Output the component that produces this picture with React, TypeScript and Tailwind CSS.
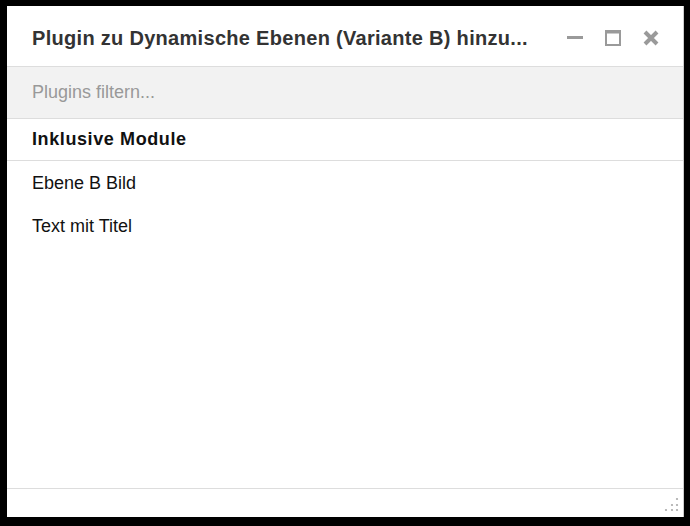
export default function App() {
  return (
    <div className="w-[690px] h-[526px] bg-black pl-[7px] pr-[6px] pt-[6px] pb-[9px] font-['Liberation_Sans',Arial,sans-serif]">
      <div className="h-full bg-white flex flex-col border-r border-[#ccc]">
        <div className="h-[61px] flex items-center justify-between pt-[3px] pl-[25px] pr-[24px] border-b border-[#ddd]">
          <h1 className="text-[20px] font-bold text-[#333] tracking-[0.3px]">
            Plugin zu Dynamische Ebenen (Variante B) hinzu...
          </h1>
          <div className="flex items-center gap-[22px] text-[#9a9a9a]">
            <svg width="16" height="16" viewBox="0 0 16 16">
              <rect x="0" y="6" width="16" height="3" fill="currentColor" />
            </svg>
            <svg width="16" height="16" viewBox="0 0 16 16">
              <rect x="1" y="1" width="14" height="14" fill="none" stroke="currentColor" strokeWidth="2" />
              <rect x="1" y="1" width="14" height="2.5" fill="currentColor" />
            </svg>
            <svg width="16" height="16" viewBox="0 0 16 16">
              <path d="M2 2 L14 14 M14 2 L2 14" stroke="currentColor" strokeWidth="4" />
            </svg>
          </div>
        </div>
        <div className="h-[52px] flex items-center pl-[25px] bg-[#f2f2f2] border-b border-[#ddd]">
          <span className="text-[18px] text-[#999]">Plugins filtern...</span>
        </div>
        <div className="h-[42px] flex items-center pl-[25px] border-b border-[#ddd]">
          <span className="text-[18px] font-bold text-[#111] tracking-[0.6px]">Inklusive Module</span>
        </div>
        <ul className="flex-1 pt-[1px] text-[18px] text-[#111]">
          <li className="h-[43px] flex items-center pl-[25px]">Ebene B Bild</li>
          <li className="h-[43px] flex items-center pl-[25px]">Text mit Titel</li>
        </ul>
        <div className="h-[29px] border-t border-[#ddd] flex justify-end items-end pr-[3px] pb-[5px]">
          <svg width="16" height="16" viewBox="0 0 16 16" fill="#aaa">
            <circle cx="13" cy="3" r="1.1" />
            <circle cx="8" cy="9" r="1.1" />
            <circle cx="13" cy="9" r="1.1" />
            <circle cx="2" cy="14" r="1.1" />
            <circle cx="8" cy="14" r="1.1" />
            <circle cx="13" cy="14" r="1.1" />
          </svg>
        </div>
      </div>
    </div>
  );
}
